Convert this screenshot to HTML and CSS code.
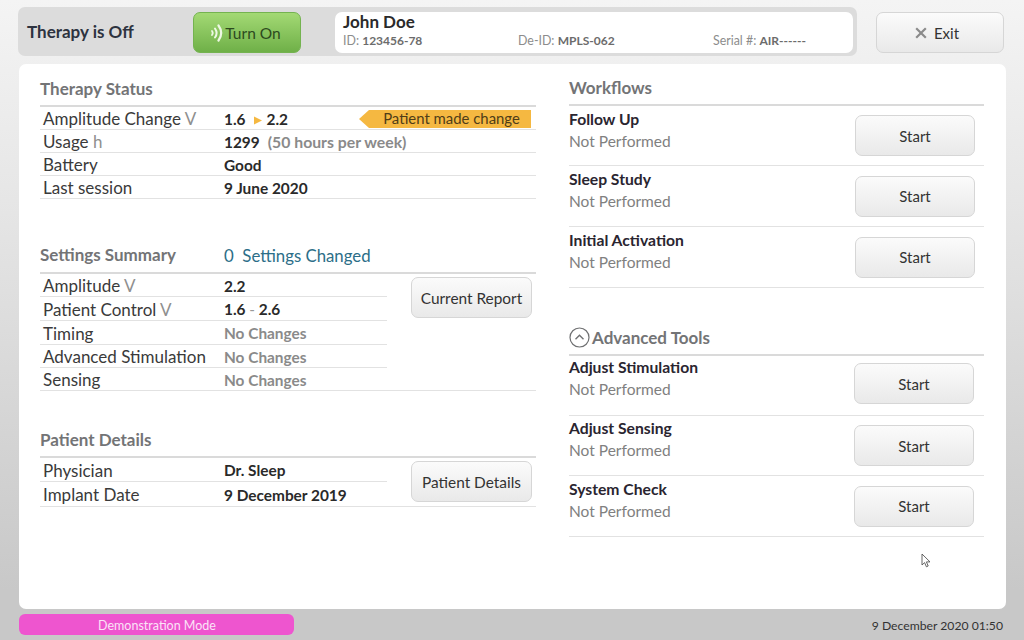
FILE: index.html
```html
<!DOCTYPE html>
<html lang="en">
<head>
<meta charset="utf-8">
<title>Therapy Status</title>
<link rel="stylesheet" href="styles.css">
</head>
<body>
<header class="top">
  <div class="bar">
    <div class="therapy">Therapy is Off</div>
    <button class="btn btn-on">
      <svg class="waves" width="14" height="20" viewBox="0 0 14 20"><g fill="none" stroke="#eef8e4" stroke-linecap="round"><path d="M2 8q1.5 2 0 4" stroke-width="1.8"/><path d="M5 5.5q3.2 4.5 0 9" stroke-width="2"/><path d="M8.5 2.5q5.4 7.5 0 15" stroke-width="2.2"/></g></svg>
      Turn On
    </button>
    <div class="patient">
      <div class="name">John Doe</div>
      <div class="ids">
        <span>ID: <b>123456-78</b></span>
        <span>De-ID: <b>MPLS-062</b></span>
        <span>Serial #: <b>AIR------</b></span>
      </div>
    </div>
  </div>
  <button class="btn btn-exit">
    <svg width="12" height="12" viewBox="0 0 12 12"><path d="M1.2 1.2l9.6 9.6M10.8 1.2l-9.6 9.6" stroke="#8b8b8b" stroke-width="2.2" fill="none"/></svg>
    Exit
  </button>
</header>

<main class="panel">
  <section class="col col-left">
    <h2 class="head head-therapy">Therapy Status</h2>
    <div class="row"><span class="lbl">Amplitude Change <i>V</i></span><span class="val">1.6<svg class="tri" width="8" height="9" viewBox="0 0 8 9"><path d="M0 .5L8 4.5 0 8.5z" fill="#f5b841"/></svg>2.2</span><span class="tag">Patient made change</span></div>
    <div class="row"><span class="lbl">Usage <i>h</i></span><span class="val">1299<span class="muted usage">(50 hours per week)</span></span></div>
    <div class="row"><span class="lbl">Battery</span><span class="val">Good</span></div>
    <div class="row"><span class="lbl">Last session</span><span class="val">9 June 2020</span></div>

    <h2 class="head head-settings"><span class="head-title">Settings Summary</span><span class="changed">0&nbsp; Settings Changed</span></h2>
    <div class="block">
      <div class="rows">
        <div class="row"><span class="lbl">Amplitude <i>V</i></span><span class="val">2.2</span></div>
        <div class="row tall"><span class="lbl">Patient Control <i>V</i></span><span class="val">1.6 <span class="dash">-</span> 2.6</span></div>
        <div class="row tall"><span class="lbl">Timing</span><span class="val muted">No Changes</span></div>
        <div class="row"><span class="lbl">Advanced Stimulation</span><span class="val muted">No Changes</span></div>
        <div class="row last short"><span class="lbl">Sensing</span><span class="val muted">No Changes</span></div>
      </div>
      <button class="btn btn-side">Current Report</button>
    </div>

    <h2 class="head head-details">Patient Details</h2>
    <div class="block">
      <div class="rows">
        <div class="row tall"><span class="lbl">Physician</span><span class="val">Dr. Sleep</span></div>
        <div class="row tall last"><span class="lbl">Implant Date</span><span class="val">9 December 2019</span></div>
      </div>
      <button class="btn btn-side">Patient Details</button>
    </div>
  </section>

  <section class="col col-right">
    <h2 class="head head-work">Workflows</h2>
    <div class="flows">
      <div class="flow"><div class="txt"><div class="title">Follow Up</div><div class="sub">Not Performed</div></div><button class="btn btn-start">Start</button></div>
      <div class="flow"><div class="txt"><div class="title">Sleep Study</div><div class="sub">Not Performed</div></div><button class="btn btn-start">Start</button></div>
      <div class="flow"><div class="txt"><div class="title">Initial Activation</div><div class="sub">Not Performed</div></div><button class="btn btn-start">Start</button></div>
    </div>

    <h2 class="head head-adv">
      <svg class="chev" width="21" height="21" viewBox="0 0 21 21"><circle cx="10.5" cy="10.5" r="9.5" fill="none" stroke="#6f7072" stroke-width="1.2"/><path d="M6.5 12.2l4-4 4 4" fill="none" stroke="#6f7072" stroke-width="1.4"/></svg>
      Advanced Tools
    </h2>
    <div class="adv">
      <div class="flow"><div class="txt"><div class="title">Adjust Stimulation</div><div class="sub">Not Performed</div></div><button class="btn btn-start">Start</button></div>
      <div class="flow"><div class="txt"><div class="title">Adjust Sensing</div><div class="sub">Not Performed</div></div><button class="btn btn-start">Start</button></div>
      <div class="flow"><div class="txt"><div class="title">System Check</div><div class="sub">Not Performed</div></div><button class="btn btn-start">Start</button></div>
    </div>
  </section>
  <svg class="cursor" width="10" height="15" viewBox="0 0 10 15"><path d="M1 1v11l2.6-2.4 1.8 4.2 1.8-.8-1.8-4.1H9z" fill="#fff" stroke="#555" stroke-width=".9"/></svg>
</main>

<footer class="foot">
  <div class="demo">Demonstration Mode</div>
  <div class="clock">9 December 2020 01:50</div>
</footer>
</body>
</html>
```
FILE: styles.css
```css
* { box-sizing: border-box; }
html, body { margin: 0; height: 640px; overflow: hidden; }
body {
  width: 1024px;
  padding: 7px 20px 0 18px;
  font-family: "Lato", "Open Sans", sans-serif;
  background: linear-gradient(#f4f4f4 0, #e6e6e6 200px, #c8c8c8 590px, #c8c8c8 100%);
  color: #333;
}
.top { display: flex; align-items: flex-start; height: 49px; }
.bar {
  width: 839px; height: 49px; background: #dcdcdc; border-radius: 7px;
  display: flex; align-items: center; padding: 0 4px 0 9px;
}
.therapy { width: 166px; font-size: 17px; font-weight: 700; color: #2d3340; }
.btn {
  font-family: inherit; color: #333; border: 1px solid #d6d6d6; border-radius: 7px;
  background: linear-gradient(#fbfbfb, #e9e9e9); padding: 0;
  display: flex; align-items: center; justify-content: center;
  font-size: 15.5px; height: 41px;
}
.btn-on {
  width: 108px; margin-top: 2px; gap: 1px; color: #2d4a1e; border-color: #74b350;
  background: linear-gradient(#a3d974, #6fb048);
}
.waves { margin-left: -3px; }
.patient {
  width: 518px; height: 41px; margin: 1px 0 0 34px; background: #fff; border-radius: 7px;
  padding: 0 8px;
}
.name { font-size: 17px; font-weight: 700; color: #2a2a2a; line-height: 20px; }
.ids {
  display: grid; grid-template-columns: 175px 195px 1fr;
  font-size: 12.4px; color: #8c8c8c; line-height: 16px; margin-top: 1px;
}
.ids b { color: #6c6c6c; font-size: 12px; }
.btn-exit { width: 128px; margin: 5px 0 0 19px; gap: 7px; font-size: 15px; padding-right: 6px; }

.panel {
  position: relative; margin: 8px 0 0 1px; width: 987px; height: 545px;
  background: #fff; border-radius: 7px; display: flex; padding: 0 22px 0 21px; gap: 33px;
}
.col-left { width: 496px; }
.col-right { width: 415px; }
.head {
  margin: 0; font-size: 17px; font-weight: 700; color: #737476;
  border-bottom: 2px solid #dadada; display: flex; align-items: center; height: 36px;
}
.head-therapy { margin-top: 7px; }
.head-title { width: 184px; flex: none; margin-top: -2px; }
.head-settings { margin-top: 39px; }
.head-details { margin-top: 31px; }
.head-work { margin-top: 6px; }
.head-adv { margin-top: 31px; height: 37px; gap: 2px; padding-top: 1px; }
.row {
  display: flex; align-items: center; height: 23px; border-bottom: 1px solid #e2e2e2;
  padding-left: 3px; padding-top: 1px; position: relative; font-size: 17px;
}
.row.tall { height: 24px; }
.row.short { height: 22px; }
.row.last { border-bottom: 0; }
.lbl { width: 181px; color: #3a3a3a; flex: none; white-space: nowrap; }
.lbl i { font-style: normal; color: #8f8f8f; }
.val { font-size: 15.4px; font-weight: 700; color: #2a2a2a; white-space: nowrap; }
.val.muted, .muted { color: #8a8a8a; }
.usage { margin-left: 8px; font-size: 15.8px; }
.tri { margin: 0 5px 0 8px; }
.tag {
  position: absolute; right: 5px; top: 3px; width: 172px; height: 18px;
  background: #f5b841; clip-path: polygon(0 50%, 10px 0, 100% 0, 100% 100%, 10px 100%);
  color: #4f3d18; font-size: 14.9px; line-height: 17px; text-align: center; padding-left: 13px;
}
.dash { font-weight: 400; color: #999; }
.changed { font-size: 16.8px; font-weight: 400; color: #2c6e88; }
.block { display: flex; border-bottom: 1px solid #e2e2e2; }
.rows { width: 347px; flex: none; }
.btn-side { width: 121px; margin: 3px 0 0 24px; font-size: 15.4px; }
.flow {
  display: flex; justify-content: space-between; align-items: center;
  height: 61px; padding-right: 9px; border-bottom: 1px solid #e2e2e2;
}
.flows .flow:first-child { height: 60px; }
.txt { align-self: flex-start; padding-top: 2px; }
.title { font-size: 15.7px; font-weight: 700; color: #2a2530; line-height: 22px; }
.sub { font-size: 15.5px; color: #808080; line-height: 23px; }
.btn-start { width: 120px; font-size: 15px; }
.adv .flow { padding-right: 10px; height: 60px; }
.adv .flow:first-child .btn-start { margin-bottom: 4px; }
.adv .flow:first-child .txt { padding-top: 0; }
.adv .flow:nth-child(2) .txt { padding-top: 1px; }
.adv .flow:last-child { height: 61px; }
.chev { flex: none; }
.cursor { position: absolute; left: 902px; top: 489px; }

.foot { display: flex; justify-content: space-between; align-items: center; margin-top: 5px; padding-left: 1px; }
.demo {
  width: 275px; height: 21px; background: #ee55cf; border-radius: 6px; color: #fbe3f7;
  font-size: 12.5px; text-align: center; line-height: 23px; padding-left: 1px;
}
.clock { font-size: 12.2px; color: #333; margin-right: 1px; padding-top: 1px; }
```
